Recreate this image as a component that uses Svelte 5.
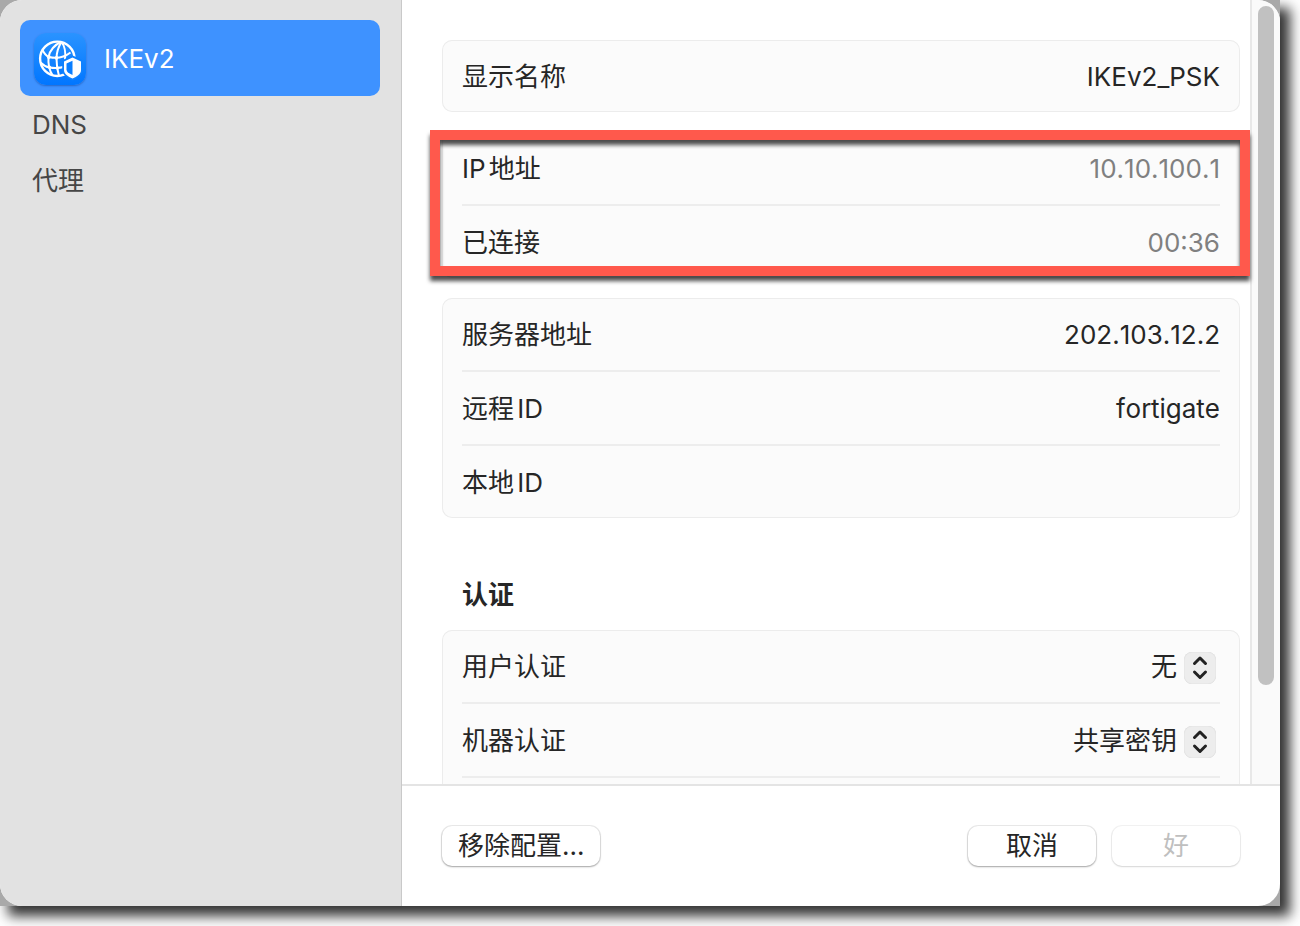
<script lang="ts">
  let section = $state("ikev2");
  let displayName = $state("IKEv2_PSK");
  let server = $state("202.103.12.2");
  let remoteId = $state("fortigate");
  let localId = $state("");
  let userAuth = $state("无");
  let machineAuth = $state("共享密钥");

  const userAuthOptions = ["无", "用户名", "证书"];
  const machineAuthOptions = ["共享密钥", "证书"];
</script>

{#snippet stepper()}
  <svg class="stepper" viewBox="0 0 32 32" aria-hidden="true">
    <path d="M10.500 11.500 16 6l5.500 5.500M10.500 20l5.500 5.500 5.500-5.500" />
  </svg>
{/snippet}

<div class="frame">
  <div class="window">
    <nav class="sidebar">
      <button class="item main" class:selected={section === "ikev2"} onclick={() => (section = "ikev2")}>
        <svg class="vpn-icon" viewBox="0 0 52 52" aria-hidden="true">
          <defs>
            <linearGradient id="vpn-bg" x1="0" y1="0" x2="0" y2="1">
              <stop offset="0" stop-color="#2a93ff" />
              <stop offset="1" stop-color="#0076ff" />
            </linearGradient>
          </defs>
          <rect width="52" height="52" rx="12" fill="url(#vpn-bg)" />
          <g fill="none" stroke="#fff" stroke-width="2">
            <circle cx="23.3" cy="25.8" r="17.2" stroke-width="2.400" />
            <path d="M27 9C21 11.500 15.500 17.500 14.500 24c-.5 7 .5 13 4 18" />
            <path d="M27.500 9C24 14.500 22.500 19.500 22.500 25.500s.5 11 2.500 17.500" />
            <path d="M27.500 9c4 5 4.500 10 3.500 18" />
            <path d="M8.500 17c2 4 4 6.200 6.500 7 7 1.800 15 .5 21.500-4.500" />
            <path d="M6.500 29.500c3 3 6 4.500 9 5 6 1 11 .5 16-1" />
          </g>
          <g fill="#fff">
            <circle cx="14.800" cy="24" r="1.900" />
            <circle cx="22.500" cy="24.800" r="1.900" />
            <circle cx="15.500" cy="34.300" r="1.700" />
            <circle cx="23.500" cy="35" r="1.700" />
          </g>
          <path d="M38.500 24.500 47 28.500v8.500c0 4-4 6.500-8.500 8.500C34 43.500 30 41 30 37v-8.500z" fill="#fff" stroke="#0f82ff" stroke-width="3.600" stroke-linejoin="round" paint-order="stroke" />
          <path d="M38.500 27.800v14.200c-3.500-1.500-6-3-6-5.500v-6z" fill="#0a7eff" />
        </svg>
        IKEv2
      </button>
      <button class="item" class:selected={section === "dns"} onclick={() => (section = "dns")}>DNS</button>
      <button class="item" class:selected={section === "proxy"} onclick={() => (section = "proxy")}>代理</button>
    </nav>

    <main class="content">
      <div class="scroller">
        <form class="form">
          <div class="card">
            <div class="row">
              <label for="name">显示名称</label>
              <input id="name" type="text" bind:value={displayName} />
            </div>
          </div>

          <div class="card status">
            <div class="row">
              <span>IP地址</span>
              <span class="muted">10.10.100.1</span>
            </div>
            <div class="row">
              <span>已连接</span>
              <span class="muted">00:36</span>
            </div>
            <div class="highlight"></div>
          </div>

          <div class="card">
            <div class="row">
              <label for="server">服务器地址</label>
              <input id="server" type="text" bind:value={server} />
            </div>
            <div class="row">
              <label for="remote">远程ID</label>
              <input id="remote" type="text" bind:value={remoteId} />
            </div>
            <div class="row">
              <label for="local">本地ID</label>
              <input id="local" type="text" bind:value={localId} />
            </div>
          </div>

          <h2>认证</h2>

          <div class="card">
            <div class="row">
              <label for="user-auth">用户认证</label>
              <div class="popup">
                <select id="user-auth" bind:value={userAuth}>
                  {#each userAuthOptions as option}
                    <option>{option}</option>
                  {/each}
                </select>
                {@render stepper()}
              </div>
            </div>
            <div class="row">
              <label for="machine-auth">机器认证</label>
              <div class="popup">
                <select id="machine-auth" bind:value={machineAuth}>
                  {#each machineAuthOptions as option}
                    <option>{option}</option>
                  {/each}
                </select>
                {@render stepper()}
              </div>
            </div>
            <div class="row"></div>
          </div>
        </form>
        <div class="track"><div class="thumb"></div></div>
      </div>

      <footer class="footer">
        <button class="push">移除配置...</button>
        <div class="actions">
          <button class="push wide">取消</button>
          <button class="push wide" disabled>好</button>
        </div>
      </footer>
    </main>
  </div>
</div>

<style>
  :global(body) {
    margin: 0;
    background: #fff;
  }
  :global(#app) {
    box-sizing: border-box;
    height: 100vh;
    padding: 0 20px 20px 0;
    overflow: hidden;
  }
  .frame {
    height: 100%;
    background: #a9a9a9;
    box-shadow: 9px 9px 12px 1px rgba(0, 0, 0, 0.8);
    font-family: Inter, "Noto Sans CJK SC", sans-serif;
    font-size: 26px;
    line-height: 32px;
    text-autospace: normal;
    color: #262626;
  }
  .window {
    display: flex;
    height: 100%;
    border-radius: 22px;
    overflow: hidden;
    background: #fff;
  }
  button, input, select {
    font: inherit;
    color: inherit;
  }

  .sidebar {
    box-sizing: border-box;
    flex: 0 0 402px;
    display: flex;
    flex-direction: column;
    padding: 20px 21px 20px 20px;
    background: #e2e2e2;
    border-right: 1px solid #c9c9c9;
  }
  .item {
    display: flex;
    align-items: center;
    gap: 18px;
    height: 56px;
    padding: 2px 12px 0;
    border: 0;
    border-radius: 10px;
    background: none;
    color: #464646;
    text-align: left;
  }
  .item.main {
    height: 76px;
    padding: 1px 14px 0;
  }
  .item.selected {
    background: #3e92ff;
    color: #fff;
  }
  .vpn-icon {
    width: 52px;
    height: 52px;
    border-radius: 12px;
    box-shadow: 0 1px 2px rgba(0, 40, 120, 0.4);
  }

  .content {
    flex: 1;
    min-width: 0;
    display: flex;
    flex-direction: column;
  }
  .scroller {
    flex: 1;
    min-height: 0;
    display: flex;
    overflow: hidden;
  }
  .form {
    flex: 1;
    display: flex;
    flex-direction: column;
    gap: 20px;
    padding: 40px 10px 0 40px;
  }
  .card {
    flex: none;
    border-radius: 10px;
    background: #fbfbfb;
    box-shadow: inset 0 0 0 1px #ececec;
    padding: 0 20px;
  }
  .row {
    display: flex;
    align-items: center;
    justify-content: space-between;
    height: 70px;
    padding-top: 2px;
  }
  .row + .row {
    border-top: 2px solid #ededed;
  }
  .row input {
    flex: 1;
    min-width: 0;
    padding: 0;
    border: 0;
    background: none;
    font-kerning: none;
    text-align: right;
    outline: none;
  }
  .muted {
    color: #808080;
    font-kerning: none;
  }
  .status {
    position: relative;
  }
  .highlight {
    position: absolute;
    inset: -2px -10px 2px -12px;
    border: 10px solid #ff594c;
    filter: drop-shadow(0 5px 2px rgba(0, 0, 0, 0.7));
    pointer-events: none;
  }
  h2 {
    margin: 0;
    padding: 41px 20px 0;
    font-size: 26px;
    line-height: 31px;
    font-weight: 700;
  }

  .popup {
    position: relative;
  }
  .popup select {
    appearance: none;
    width: 200px;
    padding: 0 43px 0 0;
    border: 0;
    background: none;
    text-align: right;
    text-align-last: right;
    outline: none;
  }
  .stepper {
    position: absolute;
    top: 50%;
    right: 4px;
    width: 32px;
    height: 32px;
    margin-top: -15px;
    border-radius: 8px;
    background: #ededed;
    box-shadow: inset 0 0 1px rgba(0, 0, 0, 0.2);
    pointer-events: none;
  }
  .stepper path {
    fill: none;
    stroke: #222;
    stroke-width: 3;
    stroke-linecap: round;
    stroke-linejoin: round;
  }

  .track {
    box-sizing: border-box;
    flex: 0 0 30px;
    padding: 6px;
    border-left: 2px solid #e8e8e8;
    background: #fafafa;
  }
  .thumb {
    height: 88%;
    border-radius: 8px;
    background: #c1c1c1;
  }

  .footer {
    display: flex;
    justify-content: space-between;
    padding: 40px;
    border-top: 2px solid #e4e4e4;
  }
  .actions {
    display: flex;
    gap: 16px;
  }
  .push {
    height: 40px;
    padding: 0 16px;
    border: 0;
    border-radius: 10px;
    background: #fff;
    box-shadow: 0 0 0 1px rgba(0, 0, 0, 0.08), 0 1px 2px rgba(0, 0, 0, 0.3);
  }
  .push.wide {
    width: 128px;
  }
  .push:disabled {
    color: #bfbfbf;
    box-shadow: 0 0 0 1px rgba(0, 0, 0, 0.05), 0 1px 2px rgba(0, 0, 0, 0.12);
  }
</style>
